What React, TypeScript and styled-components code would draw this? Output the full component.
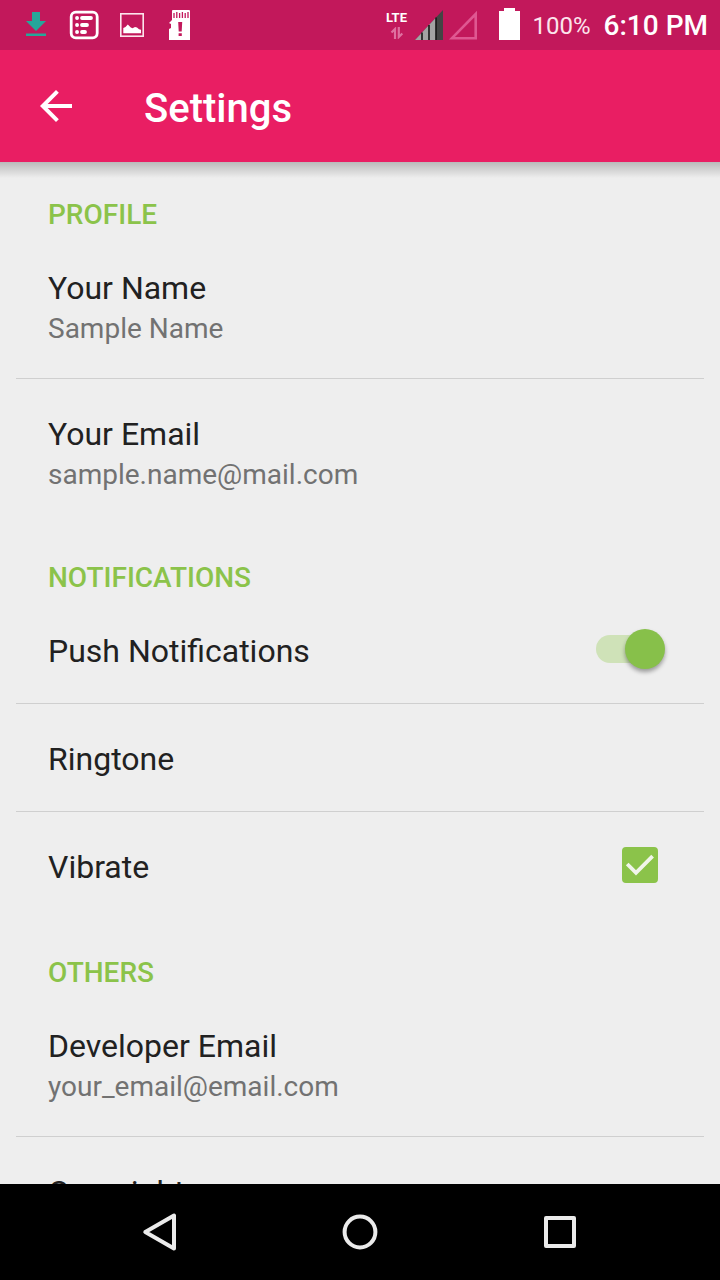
import React, { useState } from "react";
import styled, { createGlobalStyle } from "styled-components";

const color = {
  primary: "#e91e63",
  primaryDark: "#c2185b",
  accent: "#8bc34a",
  thumb: "#87c04a",
  background: "#eeeeee",
  text: "#212121",
  textSecondary: "#727272",
  divider: "#cfcfcf",
  nav: "#ebebeb",
};

const GlobalStyle = createGlobalStyle`
  *, *::before, *::after { box-sizing: border-box; }
  body {
    margin: 0;
    background: ${color.background};
    font-family: Roboto, "Noto Sans", sans-serif;
  }
  svg { display: block; flex: none; }
`;

const Screen = styled.div`
  display: flex;
  flex-direction: column;
  height: 100vh;
`;

const StatusBar = styled.div`
  display: flex;
  flex: none;
  align-items: center;
  justify-content: space-between;
  height: 50px;
  padding: 0 12px;
  background: ${color.primaryDark};
  color: #fff;
`;

const StatusGroup = styled.div`
  display: flex;
  align-items: center;
`;

const NetworkType = styled.div`
  display: flex;
  flex-direction: column;
  align-items: center;
  gap: 2px;
  width: 20px;
  margin-right: 8px;
  font-size: 13px;
  font-weight: 700;
  line-height: 14px;
`;

const BatteryLevel = styled.span`
  margin: 0 13px 0 12px;
  padding-top: 2px;
  color: #fce4ec;
  font-size: 24px;
  line-height: 48px;
`;

const Clock = styled.time`
  padding-top: 2px;
  font-size: 28px;
  font-weight: 500;
  line-height: 48px;
`;

const AppBar = styled.header`
  position: relative;
  z-index: 1;
  display: flex;
  flex: none;
  align-items: center;
  gap: 64px;
  height: 112px;
  padding: 0 32px;
  background: ${color.primary};
  color: #fff;

  &::after {
    content: "";
    position: absolute;
    top: 100%;
    left: 0;
    right: 0;
    height: 16px;
    background: linear-gradient(rgba(0, 0, 0, 0.22), rgba(0, 0, 0, 0.12) 45%, transparent);
    pointer-events: none;
  }
`;

const IconButton = styled.button`
  padding: 0;
  border: 0;
  background: none;
  color: inherit;
  cursor: pointer;
`;

const ScreenTitle = styled.h1`
  margin: 0;
  padding-top: 6px;
  font-size: 40px;
  font-weight: 500;
  line-height: 48px;
`;

const Preferences = styled.main`
  flex: 1;
  min-height: 0;
  overflow: hidden;
  padding: 0 16px;
`;

const CategoryTitle = styled.h2`
  margin: 0;
  padding: 35px 32px 0;
  color: ${color.accent};
  font-size: 28px;
  font-weight: 500;
  line-height: 36px;
  text-transform: uppercase;
`;

const rowStyles = `
  display: flex;
  align-items: center;
  justify-content: space-between;
  width: 100%;
  padding: 29px 32px 30px;
  border: 0;
  border-bottom: 1px solid ${color.divider};
  background: none;
  font-family: inherit;
  text-align: left;
  cursor: pointer;
`;

const Category = styled.section`
  & > :last-child { border-bottom-color: transparent; }
`;

const PreferenceButton = styled.button`${rowStyles}`;
const PreferenceLabel = styled.label`${rowStyles}`;

const Title = styled.span`
  display: block;
  padding-top: 4px;
  color: ${color.text};
  font-size: 32px;
  line-height: 44px;
`;

const Summary = styled.span`
  display: block;
  color: ${color.textSecondary};
  font-size: 28px;
  line-height: 38px;
`;

const Switch = styled.input`
  appearance: none;
  display: flex;
  align-items: center;
  flex: none;
  width: 68px;
  height: 28px;
  margin: 0 8px 0 0;
  border-radius: 14px;
  background: #c4c4c4;
  cursor: pointer;

  &::before {
    content: "";
    flex: none;
    width: 40px;
    height: 40px;
    border-radius: 50%;
    background: #fafafa;
    box-shadow: 0 3px 4px rgba(0, 0, 0, 0.35);
  }
  &:checked { background: #cfe2b8; }
  &:checked::before {
    margin-left: 29px;
    background: ${color.thumb};
  }
`;

const CheckControl = styled.span`
  display: grid;
  flex: none;
  width: 64px;
  height: 36px;
  place-items: center;

  & > * { grid-area: 1 / 1; }
  & > svg { pointer-events: none; }
`;

const CheckBox = styled.input`
  appearance: none;
  width: 36px;
  height: 36px;
  margin: 0;
  border: 4px solid #757575;
  border-radius: 4px;
  cursor: pointer;

  &:checked {
    border-color: ${color.accent};
    background: ${color.accent};
  }
`;

const NavigationBar = styled.nav`
  display: flex;
  flex: none;
  height: 96px;
  padding: 0 60px;
  background: #000;
  color: ${color.nav};
`;

const NavButton = styled(IconButton)`
  display: flex;
  flex: 1;
  align-items: center;
  justify-content: center;
`;

const DownloadIcon = () => (
  <svg width="48" height="50" fill="#26a69a" aria-hidden="true">
    <path d="M20 12h8v9h6L24 31 14 21h6zM14 33.5h20V36H14z" />
  </svg>
);

const ListIcon = () => (
  <svg width="48" height="50" fill="none" stroke="#fff" strokeLinecap="round" aria-hidden="true">
    <rect x="11.2" y="12.2" width="26" height="25.6" rx="4.5" strokeWidth="2.8" />
    <path strokeWidth="3.8" d="M17 18h.1M22 18h9M17 25h.1M22 25h5M17 32h.1M22 32h3" />
  </svg>
);

const PictureIcon = () => (
  <svg width="48" height="50" aria-hidden="true">
    <rect x="12.8" y="13.8" width="22.4" height="22.4" fill="none" stroke="#fce4ec" strokeWidth="1.6" />
    <path fill="#fff" d="M15.3 33.3v-5.2l2.2-1.2 2.3-2.4 3 3 1.7.8 2.5-1.2 2 .5 2 1.7 2 .5v3.5z" />
  </svg>
);

const SdCardIcon = () => (
  <svg width="48" height="50" aria-hidden="true">
    <path fill="#fff" d="M17 10h16q1 0 1 1v29H13V29l2-1v-4l-2-1 3-3v-9q0-1 1-1z" />
    <path
      fill="none"
      stroke={color.primaryDark}
      strokeWidth="1.3"
      d="M18 13v5M20.8 12v6M23.6 13v5M26.4 12v6M29.2 13v5M32 12v6"
    />
    <path fill={color.primaryDark} d="M22.2 22h4l-.5 9.5h-3zM22.6 33.3h3.2v2.8h-3.2z" />
  </svg>
);

const DataArrowsIcon = () => (
  <svg width="14" height="12" fill="none" stroke="#df70a0" strokeWidth="2.2" aria-hidden="true">
    <path d="M5 12V2L1.5 5.5M8.8 0v10l3.5-3.5" />
  </svg>
);

const SignalIcon = () => (
  <svg width="28" height="50" aria-hidden="true">
    <path fill="#444" d="M0 40 28 10v30z" />
    <path fill="#a3a3a3" d="M0 40 21 17.5V40z" />
    <path fill="none" stroke="#171717" strokeWidth="1.6" d="M7 32.5V40M14 25v15M21 17.5V40" />
  </svg>
);

const EmptySignalIcon = () => (
  <svg width="42" height="50" fill="none" stroke="#df5791" strokeWidth="2.6" aria-hidden="true">
    <path d="M9 38.2 32.7 14v24.2z" />
  </svg>
);

const BatteryIcon = () => (
  <svg width="36" height="50" fill="#fff" aria-hidden="true">
    <path d="M19 8h11v3h5v29H14V11h5z" />
  </svg>
);

const BackArrowIcon = () => (
  <svg width="48" height="48" viewBox="0 0 24 24" fill="currentColor" aria-hidden="true">
    <path d="M20 11H7.83l5.59-5.59L12 4l-8 8 8 8 1.41-1.41L7.83 13H20v-2z" />
  </svg>
);

type PreferenceProps = { title: string; summary?: string };

const Preference = ({ title, summary }: PreferenceProps) => (
  <PreferenceButton type="button">
    <span>
      <Title>{title}</Title>
      {summary && <Summary>{summary}</Summary>}
    </span>
  </PreferenceButton>
);

export default function App() {
  const [push, setPush] = useState(true);
  const [vibrate, setVibrate] = useState(true);

  return (
    <Screen>
      <GlobalStyle />
      <StatusBar>
        <StatusGroup>
          <DownloadIcon />
          <ListIcon />
          <PictureIcon />
          <SdCardIcon />
        </StatusGroup>
        <StatusGroup>
          <NetworkType>
            LTE
            <DataArrowsIcon />
          </NetworkType>
          <SignalIcon />
          <EmptySignalIcon />
          <BatteryIcon />
          <BatteryLevel>100%</BatteryLevel>
          <Clock dateTime="18:10">6:10 PM</Clock>
        </StatusGroup>
      </StatusBar>

      <AppBar>
        <IconButton type="button" aria-label="Back">
          <BackArrowIcon />
        </IconButton>
        <ScreenTitle>Settings</ScreenTitle>
      </AppBar>

      <Preferences>
        <Category>
          <CategoryTitle>Profile</CategoryTitle>
          <Preference title="Your Name" summary="Sample Name" />
          <Preference title="Your Email" summary="sample.name@mail.com" />
        </Category>
        <Category>
          <CategoryTitle>Notifications</CategoryTitle>
          <PreferenceLabel>
            <Title>Push Notifications</Title>
            <Switch
              type="checkbox"
              role="switch"
              checked={push}
              onChange={(e) => setPush(e.target.checked)}
            />
          </PreferenceLabel>
          <Preference title="Ringtone" />
          <PreferenceLabel>
            <Title>Vibrate</Title>
            <CheckControl>
              <CheckBox
                type="checkbox"
                checked={vibrate}
                onChange={(e) => setVibrate(e.target.checked)}
              />
              {vibrate && (
                <svg width="36" height="36" fill="none" stroke="#f1f5ea" strokeWidth="3.8" aria-hidden="true">
                  <path d="M5.2 17 14 25.8 30.6 9.2" />
                </svg>
              )}
            </CheckControl>
          </PreferenceLabel>
        </Category>
        <Category>
          <CategoryTitle>Others</CategoryTitle>
          <Preference title="Developer Email" summary="your_email@email.com" />
          <Preference title="Copyright" />
        </Category>
      </Preferences>

      <NavigationBar aria-label="System">
        <NavButton type="button" aria-label="Back">
          <svg width="40" height="40" fill="none" stroke="currentColor" strokeWidth="4" strokeLinejoin="round" aria-hidden="true">
            <path d="M5.3 20 34 3.5v33z" />
          </svg>
        </NavButton>
        <NavButton type="button" aria-label="Home">
          <svg width="40" height="40" fill="none" stroke="currentColor" strokeWidth="4" aria-hidden="true">
            <circle cx="20" cy="20" r="15.4" />
          </svg>
        </NavButton>
        <NavButton type="button" aria-label="Recent apps">
          <svg width="40" height="40" fill="none" stroke="currentColor" strokeWidth="4" strokeLinejoin="round" aria-hidden="true">
            <path d="M6 6h28v28H6z" />
          </svg>
        </NavButton>
      </NavigationBar>
    </Screen>
  );
}
